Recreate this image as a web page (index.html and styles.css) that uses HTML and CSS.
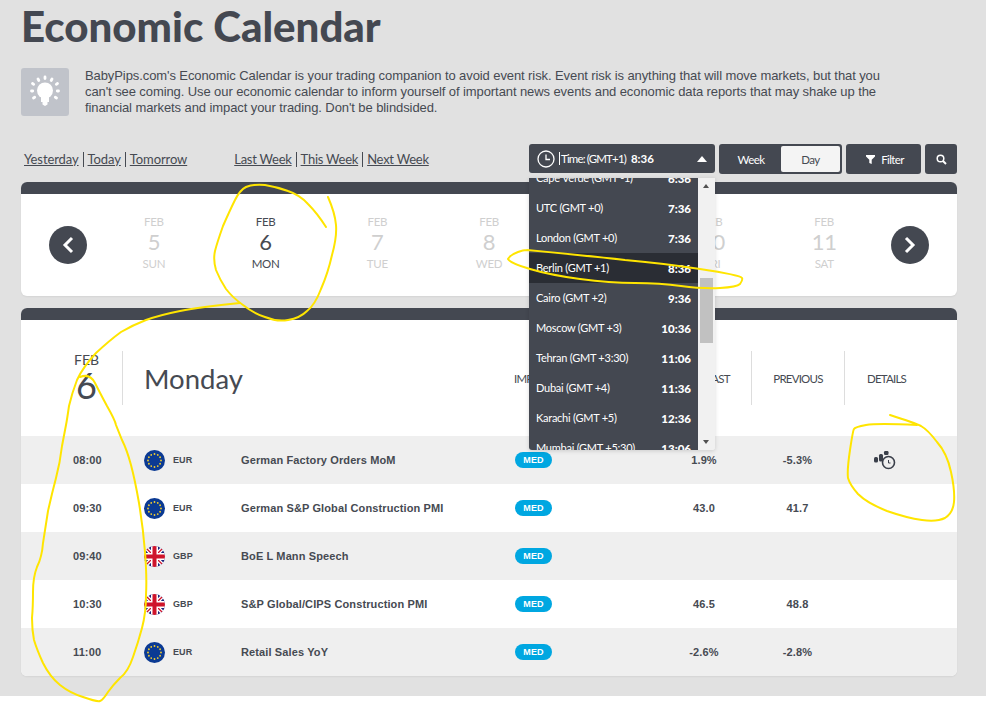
FILE: index.html
```html
<!DOCTYPE html>
<html lang="en">
<head>
    <meta charset="UTF-8">
    <meta name="viewport" content="width=device-width, initial-scale=1.0">
    <title>Economic Calendar</title>
    <link rel="stylesheet" href="styles.css">
</head>
<body>
    <svg class="defs" width="0" height="0">
        <defs>
            <symbol id="flagEur" viewBox="0 0 21 21">
                <circle cx="10.5" cy="10.5" r="10.5" fill="#0b3a93"/>
                <g fill="#f4cf2e">
                    <circle cx="10.5" cy="4" r="0.9"/><circle cx="13.75" cy="4.9" r="0.9"/><circle cx="16.1" cy="7.25" r="0.9"/>
                    <circle cx="17" cy="10.5" r="0.9"/><circle cx="16.1" cy="13.75" r="0.9"/><circle cx="13.75" cy="16.1" r="0.9"/>
                    <circle cx="10.5" cy="17" r="0.9"/><circle cx="7.25" cy="16.1" r="0.9"/><circle cx="4.9" cy="13.75" r="0.9"/>
                    <circle cx="4" cy="10.5" r="0.9"/><circle cx="4.9" cy="7.25" r="0.9"/><circle cx="7.25" cy="4.9" r="0.9"/>
                </g>
            </symbol>
            <clipPath id="flagClip"><circle cx="10.5" cy="10.5" r="10.5"/></clipPath>
            <symbol id="flagGbp" viewBox="0 0 21 21">
                <g clip-path="url(#flagClip)">
                    <rect width="21" height="21" fill="#1a237b"/>
                    <path d="M0 0L21 21M21 0L0 21" stroke="#fff" stroke-width="4"/>
                    <path d="M0 0L21 21M21 0L0 21" stroke="#cf142b" stroke-width="1.3"/>
                    <path d="M10.5 0V21M0 10.5H21" stroke="#fff" stroke-width="7"/>
                    <path d="M10.5 0V21M0 10.5H21" stroke="#cf142b" stroke-width="4"/>
                </g>
            </symbol>
        </defs>
    </svg>

    <div class="page">
        <h1>Economic Calendar</h1>

        <div class="intro">
            <div class="intro-icon">
                <svg width="30" height="42" viewBox="0 0 30 42">
                    <circle cx="15" cy="19.5" r="8" fill="#fff"/>
                    <path fill="#fff" d="M11 25h8v6h-1.500v2.500l-2.500 1.500-2.500-1.500v-2.500h-1.500z"/>
                    <g stroke="#fff" stroke-width="2.800" stroke-linecap="round">
                        <path d="M15 6v1.500M8 8l.8 1.500M22 8l-.8 1.500M2.500 12.500l1.200.8M27.500 12.500l-1.200.8M1.500 20h1.200M27.300 20h1.200M3.500 27l1.200-.7M26.500 27l-1.200-.7"/>
                    </g>
                </svg>
            </div>
            <p>BabyPips.com's Economic Calendar is your trading companion to avoid event risk. Event risk is anything that will move markets, but that you can't see coming. Use our economic calendar to inform yourself of important news events and economic data reports that may shake up the financial markets and impact your trading. Don't be blindsided.</p>
        </div>

        <div class="toolbar">
            <div class="quick-links">
                <a href="#">Yesterday</a><a href="#">Today</a><a href="#">Tomorrow</a>
            </div>
            <div class="quick-links week-links">
                <a href="#">Last Week</a><a href="#">This Week</a><a href="#">Next Week</a>
            </div>
            <div class="controls">
                <div class="time-select">
                    <svg width="18" height="18" viewBox="0 0 18 18" fill="none" stroke="#fff" stroke-width="1.300">
                        <circle cx="9" cy="9" r="8"/>
                        <path d="M9 4.500V9.500H13"/>
                    </svg>
                    <span class="time-label">Time: (GMT+1)</span>
                    <strong>8:36</strong>
                    <span class="caret"></span>
                </div>
                <div class="view-switch">
                    <span class="view-week">Week</span>
                    <span class="view-day">Day</span>
                </div>
                <button class="btn-filter">
                    <svg width="9" height="9" viewBox="0 0 9 9"><path fill="#fff" d="M0 0H9V1.500L5.700 4.700V9L3.300 8V4.700L0 1.500Z"/></svg>
                    Filter
                </button>
                <button class="btn-search">
                    <svg width="11" height="11" viewBox="0 0 11 11" fill="none" stroke="#fff">
                        <circle cx="4.500" cy="4.500" r="3.300" stroke-width="1.500"/>
                        <path d="M7 7L10 10" stroke-width="2"/>
                    </svg>
                </button>
            </div>
        </div>

        <div class="card date-card">
            <div class="card-bar"></div>
            <div class="date-strip">
                <button class="round-btn">
                    <svg width="12" height="18" viewBox="0 0 12 18" fill="none" stroke="#fff" stroke-width="3"><path d="M10 2L3 9L10 16"/></svg>
                </button>
                <div class="days">
                    <div class="day"><span>FEB</span><b>5</b><span>SUN</span></div>
                    <div class="day active"><span>FEB</span><b>6</b><span>MON</span></div>
                    <div class="day"><span>FEB</span><b>7</b><span>TUE</span></div>
                    <div class="day"><span>FEB</span><b>8</b><span>WED</span></div>
                    <div class="day"><span>FEB</span><b>9</b><span>THU</span></div>
                    <div class="day"><span>FEB</span><b>10</b><span>FRI</span></div>
                    <div class="day"><span>FEB</span><b>11</b><span>SAT</span></div>
                </div>
                <button class="round-btn">
                    <svg width="12" height="18" viewBox="0 0 12 18" fill="none" stroke="#fff" stroke-width="3"><path d="M2 2L9 9L2 16"/></svg>
                </button>
            </div>
        </div>

        <div class="card events-card">
            <div class="card-bar"></div>
            <div class="events-head grid">
                <div class="head-date">
                    <div class="head-day"><span>FEB</span><b>6</b></div>
                    <h2>Monday</h2>
                </div>
                <div class="head-cell head-impact">IMPACT</div>
                <div class="head-cell center">FORECAST</div>
                <div class="head-cell center ruled">PREVIOUS</div>
                <div class="head-cell center ruled">DETAILS</div>
            </div>

            <div class="row grid">
                <div class="time">08:00</div>
                <div class="currency"><svg class="flag"><use href="#flagEur"/></svg>EUR</div>
                <div class="title">German Factory Orders MoM</div>
                <div><span class="badge">MED</span></div>
                <div class="val">1.9%</div>
                <div class="val">-5.3%</div>
                <div class="val">
                    <svg class="detail-icon" width="22" height="20" viewBox="0 0 22 20">
                        <rect x="0" y="7" width="4" height="5.500" rx="1.500" fill="#3a3f4a"/>
                        <rect x="5" y="4" width="4" height="7.500" rx="1.500" fill="#3a3f4a"/>
                        <rect x="10" y="1" width="4.500" height="4" rx="1.200" fill="#3a3f4a"/>
                        <circle cx="14.500" cy="12.500" r="6" fill="#efefef" stroke="#3a3f4a" stroke-width="1.600"/>
                        <path d="M14.500 10V13H16.500" fill="none" stroke="#3a3f4a"/>
                    </svg>
                </div>
            </div>
            <div class="row grid">
                <div class="time">09:30</div>
                <div class="currency"><svg class="flag"><use href="#flagEur"/></svg>EUR</div>
                <div class="title">German S&amp;P Global Construction PMI</div>
                <div><span class="badge">MED</span></div>
                <div class="val">43.0</div>
                <div class="val">41.7</div>
                <div></div>
            </div>
            <div class="row grid">
                <div class="time">09:40</div>
                <div class="currency"><svg class="flag"><use href="#flagGbp"/></svg>GBP</div>
                <div class="title">BoE L Mann Speech</div>
                <div><span class="badge">MED</span></div>
                <div class="val"></div>
                <div class="val"></div>
                <div></div>
            </div>
            <div class="row grid">
                <div class="time">10:30</div>
                <div class="currency"><svg class="flag"><use href="#flagGbp"/></svg>GBP</div>
                <div class="title">S&amp;P Global/CIPS Construction PMI</div>
                <div><span class="badge">MED</span></div>
                <div class="val">46.5</div>
                <div class="val">48.8</div>
                <div></div>
            </div>
            <div class="row grid">
                <div class="time">11:00</div>
                <div class="currency"><svg class="flag"><use href="#flagEur"/></svg>EUR</div>
                <div class="title">Retail Sales YoY</div>
                <div><span class="badge">MED</span></div>
                <div class="val">-2.6%</div>
                <div class="val">-2.8%</div>
                <div></div>
            </div>
        </div>
    </div>

    <div class="time-menu">
        <div class="time-list">
            <div class="time-item"><span>Cape Verde (GMT -1)</span><b>6:36</b></div>
            <div class="time-item"><span>UTC (GMT +0)</span><b>7:36</b></div>
            <div class="time-item"><span>London (GMT +0)</span><b>7:36</b></div>
            <div class="time-item current"><span>Berlin (GMT +1)</span><b>8:36</b></div>
            <div class="time-item"><span>Cairo (GMT +2)</span><b>9:36</b></div>
            <div class="time-item"><span>Moscow (GMT +3)</span><b>10:36</b></div>
            <div class="time-item"><span>Tehran (GMT +3:30)</span><b>11:06</b></div>
            <div class="time-item"><span>Dubai (GMT +4)</span><b>11:36</b></div>
            <div class="time-item"><span>Karachi (GMT +5)</span><b>12:36</b></div>
            <div class="time-item"><span>Mumbai (GMT +5:30)</span><b>13:06</b></div>
        </div>
        <div class="scrollbar">
            <span class="arrow-up"></span>
            <span class="thumb"></span>
            <span class="arrow-down"></span>
        </div>
    </div>

    <!-- hand drawn marker notes on top of the page -->
    <svg class="marker" width="986" height="704" viewBox="0 0 986 704" fill="none">
        <path d="M326 227Q317 213 308 204Q300 195 288 191Q277 187 265 185Q253 184 246 187Q240 190 235 200Q230 210 223 226Q217 243 215 251Q213 260 216 270Q220 280 226 289Q233 298 243 305Q253 313 265 317Q277 322 288 320Q300 318 307 311Q315 305 321 289Q328 273 332 255Q337 237 336 225Q335 213 328 197"/>
        <path d="M240 303Q200 307 180 311Q160 315 146 320Q133 325 121 332Q110 340 96 353Q83 367 77 380Q72 393 69 406Q67 420 66 425Q65 430 62 446Q60 463 56 478Q52 493 48 511Q45 530 43 543Q42 557 37 567Q33 577 33 592Q33 607 32 618Q32 630 34 640Q37 650 43 663Q50 677 60 685Q70 693 83 697Q97 702 100 701Q103 700 108 692Q113 685 120 678Q128 672 133 657Q138 643 142 628Q146 613 146 595Q147 577 145 552Q143 527 139 503Q135 480 131 465Q127 450 122 440Q118 430 116 425Q115 420 107 406Q100 393 95 383Q90 373 80 377"/>
        <path d="M527 250Q590 256 625 260Q660 263 700 269Q740 275 742 278Q743 280 740 284Q737 287 720 288Q703 289 681 286Q660 283 635 283Q610 283 580 279Q550 275 530 269Q510 263 508 259Q510 255 518 252Q523 250 527 250"/>
        <path d="M917 425Q877 423 866 425Q855 427 854 429Q853 430 850 450Q847 470 848 478Q850 485 858 494Q867 503 887 511Q907 518 922 520Q937 522 945 518Q953 513 954 502Q955 490 951 472Q947 453 937 442Q928 430 921 426Q915 423 890 415"/>
    </svg>
</body>
</html>
```

FILE: styles.css
```css
:root {
    --dark: #444851;
    --text: #464a52;
    --page: #e1e1e1;
    --row: #efefef;
    --gothic: 'Lato', 'Liberation Sans', sans-serif;
    --arial: 'Liberation Sans', Arial, sans-serif;
}

* {
    margin: 0;
    padding: 0;
    box-sizing: border-box;
}

html {
    background: #fff;
}

body {
    position: relative;
    height: 704px;
    overflow: hidden;
    font-family: var(--gothic);
    color: var(--text);
}

.defs {
    position: absolute;
}

.page {
    height: 696px;
    padding: 0 29px 0 21px;
    background: var(--page);
}

h1 {
    height: 52px;
    padding-top: 3px;
    font-size: 42px;
    line-height: 46px;
    font-weight: 900;
    color: var(--dark);
}

.intro {
    display: flex;
    gap: 16px;
    margin-top: 16px;
}

.intro-icon {
    flex: none;
    display: flex;
    align-items: center;
    justify-content: center;
    width: 48px;
    height: 48px;
    background: #c0c3ca;
    border-radius: 3px;
}

.intro p {
    width: 810px;
    font-family: var(--arial);
    font-size: 13px;
    line-height: 16px;
    letter-spacing: -0.09px;
}

.toolbar {
    display: flex;
    align-items: center;
    height: 30px;
    margin-top: 28px;
}

.quick-links {
    display: flex;
    margin-left: 3px;
    font-size: 13px;
    line-height: 15px;
    letter-spacing: -0.1px;
}

.quick-links a {
    color: var(--text);
    padding: 0 4px;
    border-left: 1px solid var(--text);
}

.quick-links a:first-child {
    padding-left: 0;
    border-left: none;
}

.week-links {
    margin-left: 43px;
    letter-spacing: -0.25px;
}

.controls {
    display: flex;
    gap: 4px;
    margin-left: auto;
    color: #fff;
}

.time-select,
.view-switch,
.btn-filter,
.btn-search {
    height: 30px;
    background: var(--dark);
    border: none;
    border-radius: 3px;
    color: #fff;
    font-family: var(--gothic);
    font-size: 11.5px;
    letter-spacing: -0.6px;
}

.time-select {
    display: flex;
    align-items: center;
    width: 186px;
    height: 29px;
    padding: 0 8px;
}

.time-label {
    margin: 0 5px 0 4px;
    padding-left: 1px;
    border-left: 1px solid #fff;
    letter-spacing: -0.85px;
}

.time-select strong {
    letter-spacing: 0;
}

.caret {
    margin-left: auto;
    border: 5px solid transparent;
    border-top: none;
    border-bottom: 6px solid #fff;
}

.view-switch {
    display: flex;
    width: 123px;
    padding: 2px;
}

.view-week,
.view-day {
    display: flex;
    align-items: center;
    justify-content: center;
    flex: 1;
}

.view-week {
    flex: none;
    width: 60px;
}

.view-day {
    background: #f4f4f4;
    color: var(--text);
    border-radius: 2px;
}

.btn-filter {
    display: flex;
    align-items: center;
    justify-content: center;
    gap: 6px;
    width: 75px;
    padding-left: 3px;
}

.btn-search {
    display: flex;
    align-items: center;
    justify-content: center;
    width: 32px;
}

.card {
    overflow: hidden;
    background: #fff;
    border-radius: 6px;
    box-shadow: 0 1px 2px rgba(0, 0, 0, 0.06);
}

.card-bar {
    height: 12px;
    background: var(--dark);
}

.date-card {
    height: 114px;
    margin-top: 8px;
}

.date-strip {
    display: flex;
    align-items: center;
    gap: 11px;
    height: 102px;
    padding: 0 28px;
}

.round-btn {
    flex: none;
    display: flex;
    align-items: center;
    justify-content: center;
    width: 38px;
    height: 38px;
    background: var(--dark);
    border: none;
    border-radius: 50%;
}

.days {
    display: flex;
    flex: 1;
}

.day {
    display: flex;
    flex: 1;
    flex-direction: column;
    align-items: center;
    color: #cfcfcf;
    font-size: 11.5px;
    letter-spacing: -0.3px;
    line-height: 15px;
    margin-top: -6px;
}

.day b {
    font-size: 22px;
    font-weight: 400;
    line-height: 25px;
    margin-bottom: 2px;
}

.day.active {
    color: var(--text);
}

.events-card {
    height: 368px;
    margin-top: 12px;
}

.grid {
    display: grid;
    grid-template-columns: 123px 97px 274px 142px 94px 93px 84px;
    align-items: center;
}

.events-head {
    height: 116px;
}

.head-date {
    grid-column: 1 / 4;
    display: flex;
    align-items: center;
    height: 54px;
}

.head-day {
    display: flex;
    flex-direction: column;
    align-items: center;
    width: 102px;
    height: 54px;
    padding: 2px 0 0 30px;
    border-right: 1px solid #ddd;
    font-size: 14px;
    line-height: 14px;
}

.head-day b {
    font-size: 36px;
    line-height: 36px;
    font-weight: 400;
}

.head-date h2 {
    margin-left: 21px;
    font-size: 27.5px;
    font-weight: 400;
}

.head-cell {
    display: flex;
    align-items: center;
    height: 54px;
    font-size: 11.5px;
    letter-spacing: -0.8px;
}

.head-cell.center {
    justify-content: center;
}

.head-cell.ruled {
    border-left: 1px solid #ddd;
}

.head-impact {
    margin-left: -1px;
}

.row {
    height: 48px;
    font-family: var(--arial);
    font-size: 11px;
    font-weight: 700;
    letter-spacing: 0.12px;
}

.row:nth-child(odd) {
    background: var(--row);
}

.time {
    padding-left: 52px;
}

.currency {
    display: flex;
    align-items: center;
    gap: 8px;
    font-size: 9px;
}

.flag {
    width: 21px;
    height: 21px;
}

.badge {
    display: block;
    width: 37px;
    height: 16px;
    background: #00a7e1;
    border-radius: 8px;
    color: #fff;
    font-size: 9px;
    line-height: 16px;
    text-align: center;
}

.val {
    display: flex;
    justify-content: center;
    font-weight: 700;
}

.detail-icon {
    margin-left: -2px;
}

.time-menu {
    position: absolute;
    top: 178px;
    left: 529px;
    display: flex;
    width: 186px;
    height: 272px;
    overflow: hidden;
    border-radius: 0 0 3px 3px;
    box-shadow: 0 1px 4px rgba(0, 0, 0, 0.15);
}

.time-list {
    flex: 1;
    margin-top: -15px;
    background: var(--dark);
    color: #fff;
    font-size: 11px;
    letter-spacing: -0.25px;
}

.time-item {
    display: flex;
    align-items: center;
    justify-content: space-between;
    height: 30px;
    padding: 0 7px 2px 7px;
}

.time-item b {
    position: relative;
    top: 1px;
    font-weight: 900;
    font-size: 11.5px;
    letter-spacing: 0;
}

.time-item.current {
    background: #2a2d34;
}

.scrollbar {
    position: relative;
    flex: none;
    width: 17px;
    background: #f1f1f1;
}

.thumb {
    position: absolute;
    top: 100px;
    left: 2px;
    width: 13px;
    height: 65px;
    background: #c1c1c1;
}

.arrow-up,
.arrow-down {
    position: absolute;
    left: 5px;
    border: 3.5px solid transparent;
}

.arrow-up {
    top: 6px;
    border-top: none;
    border-bottom: 4px solid #505050;
}

.arrow-down {
    bottom: 6px;
    border-bottom: none;
    border-top: 4px solid #505050;
}

.marker {
    position: absolute;
    top: 0;
    left: 0;
    pointer-events: none;
}

.marker path {
    stroke: #ffe500;
    stroke-width: 2;
    stroke-linecap: round;
}
```
